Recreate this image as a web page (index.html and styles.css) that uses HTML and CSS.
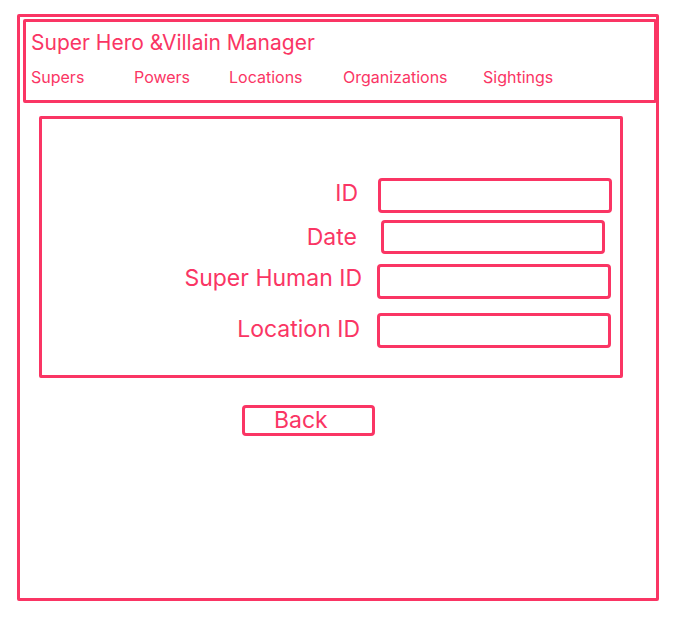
FILE: index.html
```html
<!DOCTYPE html>
<html>
<head>
<meta charset="utf-8">
<link rel="stylesheet" href="styles.css">
</head>
<body>
<div class="frame">
  <header class="header">
    <div class="title">Super Hero &amp;Villain Manager</div>
    <nav class="nav">
      <span>Supers</span>
      <span>Powers</span>
      <span>Locations</span>
      <span>Organizations</span>
      <span>Sightings</span>
    </nav>
  </header>
  <section class="form">
    <div class="row row-id">
      <label class="label">ID</label>
      <div class="input"></div>
    </div>
    <div class="row row-date">
      <label class="label">Date</label>
      <div class="input input-date"></div>
    </div>
    <div class="row row-super">
      <label class="label label-super">Super Human ID</label>
      <div class="input"></div>
    </div>
    <div class="row row-loc">
      <label class="label">Location ID</label>
      <div class="input"></div>
    </div>
  </section>
  <div class="back">Back</div>
</div>
</body>
</html>
```

FILE: styles.css
```css
* { box-sizing: border-box; }
html, body { margin: 0; padding: 0; background: #fff; }
body {
  font-family: Inter, "Noto Sans", sans-serif;
  color: #fa3564;
}
.frame {
  margin: 14px 0 0 17px;
  width: 642px;
  height: 587px;
  border: 3px solid #fa3564;
  border-radius: 2px;
  padding: 2px 0 0 3px;
}
.header {
  width: 634px;
  height: 84px;
  border: 3px solid #fa3564;
  border-radius: 2px;
  padding: 9px 0 0 5px;
}
.title {
  font-size: 21px;
  line-height: 24px;
}
.nav {
  margin-top: 13px;
  display: grid;
  grid-template-columns: 103px 95px 114px 140px auto;
  font-size: 16px;
  line-height: 19px;
}
.form {
  margin: 13px 0 0 16px;
  width: 584px;
  height: 262px;
  border: 3px solid #fa3564;
  border-radius: 2px;
  padding-top: 59px;
}
.row {
  display: grid;
  grid-template-columns: 318px auto;
  align-items: center;
}
.row-date { margin-top: 7px; }
.row-super { margin-top: 10px; }
.row-loc { margin-top: 14px; }
.label {
  text-align: right;
  font-size: 23px;
  line-height: 26px;
}
.row-id .label { margin-right: 2px; position: relative; top: -3px; }
.row-date .label { margin-right: 3px; }
.row-super .label { margin-right: -2px; position: relative; top: -4px; }
.row-loc .label { position: relative; top: -2px; }
.input {
  margin-left: 18px;
  width: 234px;
  height: 35px;
  border: 3px solid #fa3564;
  border-radius: 4px;
}
.row-id .input { margin-left: 18px; }
.row-super .input, .row-loc .input { margin-left: 17px; }
.input-date {
  margin-left: 21px;
  width: 224px;
  height: 34px;
}
.back {
  margin: 27px 0 0 219px;
  width: 133px;
  height: 31px;
  border: 3px solid #fa3564;
  border-radius: 4px;
  font-size: 23px;
  line-height: 25px;
  padding-left: 29px;
}
```
